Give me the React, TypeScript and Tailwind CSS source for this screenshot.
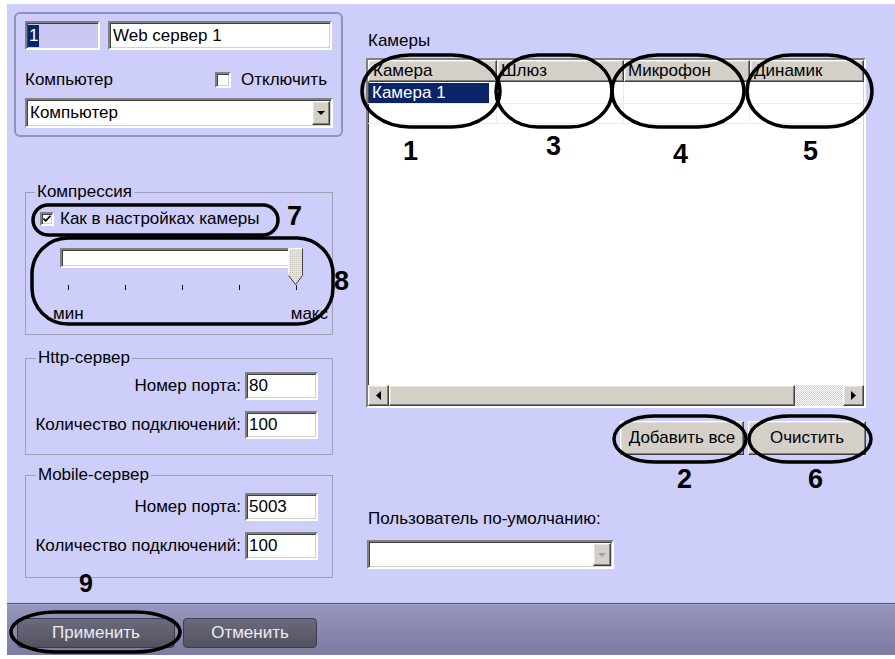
import React from "react";

const sunken =
  "border-2 border-t-[#808080] border-l-[#808080] border-b-[#ffffff] border-r-[#ffffff] shadow-[inset_1px_1px_0_#404040,inset_-1px_-1px_0_#d4d0c8]";
const raised =
  "border border-t-[#ffffff] border-l-[#ffffff] border-b-[#404040] border-r-[#404040] shadow-[inset_-1px_-1px_0_#808080,inset_1px_1px_0_#e4e2dc] bg-[#d4d0c8]";

function DownArrow({ color = "#000000" }: { color?: string }) {
  return (
    <svg width="8" height="4" viewBox="0 0 8 4">
      <path d="M0 0h8L4 4z" fill={color} />
    </svg>
  );
}

function SideArrow({ dir }: { dir: "l" | "r" }) {
  return (
    <svg width="5" height="9" viewBox="0 0 5 9">
      {dir === "l" ? <path d="M5 0v9L0 4.5z" fill="#000" /> : <path d="M0 0v9L5 4.5z" fill="#000" />}
    </svg>
  );
}

function Row({ label, value }: { label: string; value: string }) {
  return (
    <div className="flex items-center justify-end gap-[4px] pr-[14px]">
      <span>{label}</span>
      <div className={`${sunken} w-[73px] h-[28px] bg-white flex items-center pl-[2px]`}>{value}</div>
    </div>
  );
}

export default function App() {
  return (
    <div className="relative w-[895px] h-[659px] overflow-hidden bg-white text-black font-['Liberation_Sans',Arial,sans-serif] text-[17px] leading-[20px]">
      <div className="h-[4px]" />
      <div className="ml-[7px] w-[888px] h-[651px] flex flex-col">
        <div className="h-[599px] bg-[#cecefb] flex">
          {/* LEFT COLUMN */}
          <div className="w-[343px] flex flex-col">
            <div className="ml-[7px] mt-[8px] w-[329px] h-[125px] border-2 border-[#9292b6] rounded-[6px] pl-[9px] pt-[7px] flex flex-col">
              <div className="flex gap-[8px]">
                <div className={`${sunken} w-[75px] h-[29px] bg-[#c8c8f2] flex items-center pl-[1px]`}>
                  <span className="bg-[#0a246a] text-white h-[22px] leading-[22px] px-[1px]">1</span>
                </div>
                <div className={`${sunken} w-[224px] h-[29px] bg-white flex items-center pl-[3px]`}>
                  Web сервер 1
                </div>
              </div>
              <div className="mt-[19px] h-[22px] flex items-center justify-between pr-[14px]">
                <span>Компьютер</span>
                <div className="flex items-center gap-[10px]">
                  <div className={`${sunken} w-[16px] h-[16px] bg-white`} />
                  <span>Отключить</span>
                </div>
              </div>
              <div className={`mt-[7px] ${sunken} w-[308px] h-[30px] bg-white flex items-center`}>
                <span className="flex-1 pl-[3px]">Компьютер</span>
                <div className={`${raised} w-[18px] h-[24px] mr-[1px] flex items-center justify-center`}>
                  <DownArrow />
                </div>
              </div>
            </div>

            <fieldset className="ml-[18px] mt-[45px] w-[308px] border border-[#9e9eb6] pb-[10px]">
              <legend className="ml-[9px] px-[2px] leading-[20px] bg-[#cecefb]">Компрессия</legend>
              <div className="mt-[7px] h-[20px] flex items-center ml-[14px] gap-[6px]">
                <div className={`${sunken} w-[14px] h-[14px] bg-white flex items-center justify-center`}>
                  <svg width="8" height="8" viewBox="0 0 8 8">
                    <path d="M0.5 3.5l2.2 2.3L7.5 0.8" stroke="#000" strokeWidth="1.8" fill="none" />
                  </svg>
                </div>
                <span>Как в настройках камеры</span>
              </div>
              <div className="relative mt-[19px] ml-[34px] w-[243px] h-[37px]">
                <div className={`${sunken} mt-[5px] w-[237px] h-[20px] bg-white`} />
                <svg className="absolute right-0 top-0" width="15" height="37" viewBox="0 0 15 37">
                  <defs>
                    <pattern id="dots" width="2" height="2" patternUnits="userSpaceOnUse">
                      <rect width="2" height="2" fill="#e6e4e0" />
                      <rect width="1" height="1" fill="#c8c4bc" />
                    </pattern>
                  </defs>
                  <path d="M0.5 0.5h14v27l-7 9l-7-9z" fill="url(#dots)" />
                  <path d="M0.5 27.5v-27h14" stroke="#ffffff" fill="none" />
                  <path d="M14.5 0.5v27l-7 9l-7-9" stroke="#404040" fill="none" />
                </svg>
              </div>
              <div className="ml-[42px] w-[229px] h-[5px] flex justify-between">
                <div className="w-[1px] h-[5px] bg-black" />
                <div className="w-[1px] h-[5px] bg-black" />
                <div className="w-[1px] h-[5px] bg-black" />
                <div className="w-[1px] h-[5px] bg-black" />
                <div className="w-[1px] h-[5px] bg-black" />
              </div>
              <div className="mt-[14px] h-[20px] flex items-center justify-between pl-[27px] pr-[4px]">
                <span>мин</span>
                <span>макс</span>
              </div>
            </fieldset>

            <fieldset className="ml-[18px] mt-[13px] w-[308px] border border-[#9e9eb6] pb-[15px]">
              <legend className="ml-[10px] px-[2px] leading-[20px]">Http-сервер</legend>
              <div className="mt-[4px]">
                <Row label="Номер порта:" value="80" />
              </div>
              <div className="mt-[11px]">
                <Row label="Количество подключений:" value="100" />
              </div>
            </fieldset>

            <fieldset className="ml-[18px] mt-[10px] w-[308px] border border-[#9e9eb6] pb-[17px]">
              <legend className="ml-[10px] px-[2px] leading-[20px]">Mobile-сервер</legend>
              <div className="mt-[8px]">
                <Row label="Номер порта:" value="5003" />
              </div>
              <div className="mt-[11px]">
                <Row label="Количество подключений:" value="100" />
              </div>
            </fieldset>
          </div>

          {/* RIGHT COLUMN */}
          <div className="flex-1 flex flex-col pl-[16px]">
            <div className="mt-[27px] ml-[2px] h-[20px]">Камеры</div>
            <div className={`mt-[7px] ${sunken} w-[500px] h-[350px] bg-white flex flex-col`}>
              <div className="h-[22px] flex">
                <div className={`${raised} w-[129px] pl-[4px] flex items-center`}>Камера</div>
                <div className={`${raised} w-[127px] pl-[3px] flex items-center`}>Шлюз</div>
                <div className={`${raised} w-[126px] pl-[3px] flex items-center`}>Микрофон</div>
                <div className={`${raised} flex-1 pl-[3px] flex items-center`}>Динамик</div>
              </div>
              <div className="h-[22px] flex border-b border-[#ececec]">
                <div className="w-[129px] pl-[1px] pr-[7px] flex items-center border-r border-[#ececec]">
                  <span className="w-full h-[20px] bg-[#0a246a] text-white pl-[3px] leading-[20px]">Камера 1</span>
                </div>
                <div className="w-[127px] border-r border-[#ececec]" />
                <div className="w-[126px] border-r border-[#ececec]" />
                <div className="flex-1" />
              </div>
              <div className="h-[20px] flex border-b border-[#ececec]">
                <div className="w-[129px] border-r border-[#ececec]" />
                <div className="w-[127px] border-r border-[#ececec]" />
                <div className="w-[126px] border-r border-[#ececec]" />
                <div className="flex-1" />
              </div>
              <div className="flex-1" />
              <div className="h-[21px] flex">
                <div className={`${raised} w-[21px] flex items-center justify-center`}>
                  <SideArrow dir="l" />
                </div>
                <div className={`${raised} w-[406px]`} />
                <div className="flex-1 bg-[repeating-conic-gradient(#d4d0c8_0_25%,#ffffff_0_50%)] bg-[length:2px_2px]" />
                <div className={`${raised} w-[21px] flex items-center justify-center`}>
                  <SideArrow dir="r" />
                </div>
              </div>
            </div>
            <div className="mt-[13px] w-[500px] flex justify-end gap-[4px]">
              <div className={`${raised} w-[124px] h-[34px] flex items-center justify-center`}>Добавить все</div>
              <div className={`${raised} w-[118px] h-[34px] flex items-center justify-center`}>Очистить</div>
            </div>
            <div className="mt-[54px] ml-[2px] h-[20px]">Пользователь по-умолчанию:</div>
            <div className={`mt-[11px] ml-[1px] ${sunken} w-[247px] h-[29px] bg-white flex items-center justify-end`}>
              <div className={`${raised} w-[18px] h-[23px] mr-[1px] flex items-center justify-center`}>
                <DownArrow color="#a0a0a0" />
              </div>
            </div>
          </div>
        </div>
        <div className="h-[1px] bg-[#505074]" />
        <div className="h-[1px] bg-[#a8a8cc]" />
        <div className="flex-1 bg-gradient-to-b from-[#9696be] to-[#7c7ca2] flex items-start pt-[13px] pl-[10px] gap-[8px]">
          <div className="w-[158px] h-[30px] rounded-[4px] border border-[#3c3c4e] bg-gradient-to-b from-[#6a6a7e] to-[#52525f] text-[#ececf2] flex items-center justify-center">
            Применить
          </div>
          <div className="w-[134px] h-[30px] rounded-[4px] border border-[#3c3c4e] bg-gradient-to-b from-[#6a6a7e] to-[#52525f] text-[#ececf2] flex items-center justify-center">
            Отменить
          </div>
        </div>
      </div>

      {/* Annotations */}
      <svg className="absolute left-0 top-0 pointer-events-none" width="895" height="659" viewBox="0 0 895 659">
        <g fill="none" stroke="#000" strokeWidth="3.5">
          <rect x="362" y="55" width="138" height="72" rx="48" ry="36" />
          <rect x="496" y="55" width="116" height="72" rx="42" ry="36" />
          <rect x="612" y="55" width="132" height="72" rx="46" ry="36" />
          <rect x="747" y="55" width="125" height="72" rx="44" ry="36" />
          <rect x="33" y="205" width="245" height="30" rx="15" ry="15" />
          <rect x="32" y="238" width="301" height="86" rx="36" ry="36" />
          <rect x="614" y="416" width="132" height="46" rx="40" ry="23" />
          <rect x="749" y="416" width="122" height="46" rx="40" ry="23" />
          <rect x="11" y="612" width="169" height="40" rx="45" ry="20" />
        </g>
      </svg>
      <span className="absolute left-[403px] top-[138px] text-[27px] leading-[27px] font-bold">1</span>
      <span className="absolute left-[546px] top-[133px] text-[27px] leading-[27px] font-bold">3</span>
      <span className="absolute left-[673px] top-[141px] text-[27px] leading-[27px] font-bold">4</span>
      <span className="absolute left-[803px] top-[138px] text-[27px] leading-[27px] font-bold">5</span>
      <span className="absolute left-[287px] top-[203px] text-[27px] leading-[27px] font-bold">7</span>
      <span className="absolute left-[334px] top-[268px] text-[27px] leading-[27px] font-bold">8</span>
      <span className="absolute left-[677px] top-[466px] text-[27px] leading-[27px] font-bold">2</span>
      <span className="absolute left-[808px] top-[466px] text-[27px] leading-[27px] font-bold">6</span>
      <span className="absolute left-[79px] top-[571px] text-[25px] leading-[25px] font-bold">9</span>
    </div>
  );
}
